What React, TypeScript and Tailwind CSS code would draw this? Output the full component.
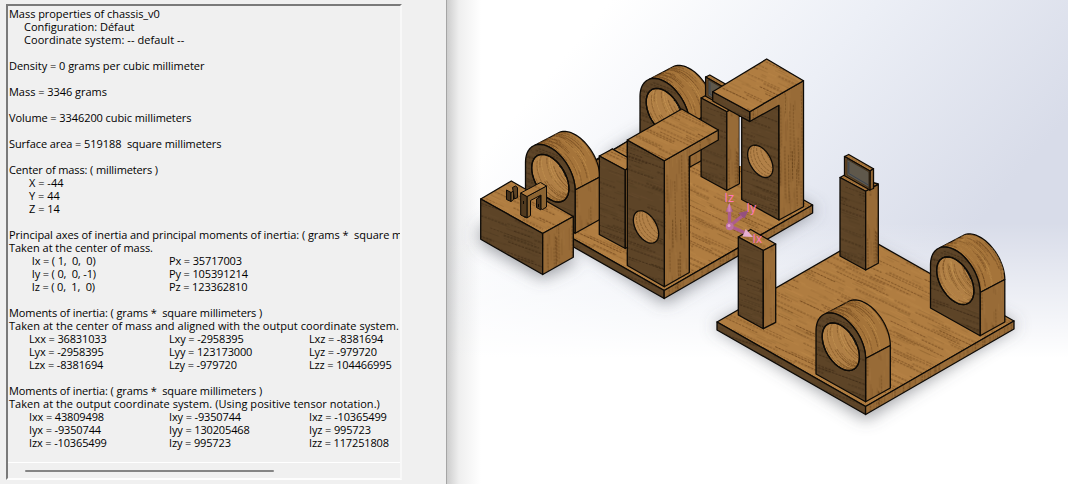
import React from "react";

type Row = { text?: string; style?: string; cells?: string[] };

const rows: Row[] = [
  { text: "Mass properties of chassis_v0", style: "tracking-[-0.04px]" },
  { text: "Configuration: Défaut", style: "pl-[15px]" },
  { text: "Coordinate system: -- default --", style: "pl-[15px] tracking-[0.07px]" },
  {},
  { text: "Density = 0 grams per cubic millimeter", style: "tracking-[-0.03px]" },
  {},
  { text: "Mass = 3346 grams", style: "tracking-[-0.04px]" },
  {},
  { text: "Volume = 3346200 cubic millimeters", style: "tracking-[-0.08px]" },
  {},
  { text: "Surface area = 519188  square millimeters", style: "tracking-[-0.08px]" },
  {},
  { text: "Center of mass: ( millimeters )", style: "tracking-[-0.12px]" },
  { text: "X = -44", style: "pl-[20px]" },
  { text: "Y = 44", style: "pl-[20px]" },
  { text: "Z = 14", style: "pl-[20px]" },
  {},
  { text: "Principal axes of inertia and principal moments of inertia: ( grams *  square millimeters )", style: "tracking-[-0.05px]" },
  { text: "Taken at the center of mass.", style: "tracking-[-0.03px]" },
  { cells: [" Ix = ( 1,  0,  0)", "Px = 35717003"] },
  { cells: [" Iy = ( 0,  0, -1)", "Py = 105391214"] },
  { cells: [" Iz = ( 0,  1,  0)", "Pz = 123362810"] },
  {},
  { text: "Moments of inertia: ( grams *  square millimeters )", style: "tracking-[-0.1px]" },
  { text: "Taken at the center of mass and aligned with the output coordinate system.", style: "tracking-[0.04px]" },
  { cells: ["Lxx = 36831033", "Lxy = -2958395", "Lxz = -8381694"] },
  { cells: ["Lyx = -2958395", "Lyy = 123173000", "Lyz = -979720"] },
  { cells: ["Lzx = -8381694", "Lzy = -979720", "Lzz = 104466995"] },
  {},
  { text: "Moments of inertia: ( grams *  square millimeters )", style: "tracking-[-0.1px]" },
  { text: "Taken at the output coordinate system. (Using positive tensor notation.)", style: "tracking-[0.05px]" },
  { cells: ["Ixx = 43809498", "Ixy = -9350744", "Ixz = -10365499"] },
  { cells: ["Iyx = -9350744", "Iyy = 130205468", "Iyz = 995723"] },
  { cells: ["Izx = -10365499", "Izy = 995723", "Izz = 117251808"] },
];

function random(seed: number) {
  let s = seed;
  return () => {
    s = (s * 16807) % 2147483647;
    return s / 2147483647;
  };
}

type GrainProps = { id: string; base: string; dark: string; light: string; angle: number; seed: number };

function Grain({ id, base, dark, light, angle, seed }: GrainProps) {
  const r = random(seed);
  const lines: React.ReactNode[] = [];
  for (let i = 0; i < 420; i++) {
    const x = r() * 160;
    const y = r() * 160;
    const len = 5 + r() * 18;
    const color = r() > 0.5 ? dark : light;
    lines.push(<path key={`f${i}`} d={`M${x} ${y}h${len}M${x - 160} ${y}h${len}`} stroke={color} strokeWidth="0.8" strokeOpacity="0.24" />);
  }
  for (let i = 0; i < 80; i++) {
    const x = r() * 160;
    const y = i * 2 + r() * 1.4;
    const len = 18 + r() * 45;
    const o = 0.45 + r() * 0.4;
    lines.push(<path key={`s${i}`} d={`M${x} ${y}h${len}M${x - 160} ${y}h${len}`} stroke={dark} strokeWidth="0.9" strokeOpacity={o} strokeDasharray="2.6 1" />);
  }
  return (
    <pattern id={id} width="160" height="160" patternUnits="userSpaceOnUse" patternTransform={`rotate(${angle})`}>
      <rect width="160" height="160" fill={base} />
      {lines}
    </pattern>
  );
}

const TOP = "url(#top)";
const DARK = "url(#dark)";
const SIDE = "url(#side)";

function Face({ p, f }: { p: string; f: string }) {
  return <polygon points={p} fill={f} />;
}

function Plate() {
  return (
    <g>
      <Face p="717,322 865,236.6 1014,321 865.6,406.5" f={TOP} />
      <Face p="717,322 865.6,406.5 865.6,414.5 717,330" f={DARK} />
      <Face p="1014,321 865.6,406.5 865.6,414.5 1014,329" f={SIDE} />
    </g>
  );
}

const CX = 840.8;
const CY = 344.7;

function arc(cx: number, cy: number, k: number, from: number, to: number) {
  const pts: string[] = [];
  for (let i = 0; i <= 40; i++) {
    const t = from + ((to - from) * i) / 40;
    const x = cx + k * 24.8 * Math.cos(t);
    const y = cy + k * (13.8 * Math.cos(t) - 28.6 * Math.sin(t));
    pts.push(`${x.toFixed(2)},${y.toFixed(2)}`);
  }
  return pts;
}

function Ring({ dx, dy, id }: { dx: number; dy: number; id: string }) {
  const tangent = Math.PI * 0.715;
  const front = arc(CX, CY, 1, 0, Math.PI);
  const outerFront = arc(CX, CY, 1, 0, tangent);
  const outerBack = arc(CX + 24.7, CY - 13, 1, tangent, 0);
  const hole = arc(CX, CY + 2, 0.75, 0, Math.PI * 2);
  const r = random(id.length * 97 + 31);
  const strands = Array.from({ length: 50 }, (_, i) => {
    const t = (i % 25) / 25 + r() * 0.03;
    const a = r() * 2;
    return { t, a, b: a + 0.3 + r() * 0.7, dark: r() > 0.4, o: 0.35 + r() * 0.45 };
  });
  return (
    <g transform={`translate(${dx} ${dy})`}>
      <clipPath id={id}><polygon points={hole.join(" ")} /></clipPath>
      <polygon points={[...outerFront, ...outerBack].join(" ")} fill="#a5743a" />
      <g fill="none">
        {strands.map((s, i) => (
          <polyline key={i} points={arc(CX + 24.7 * s.t, CY - 13 * s.t, 1, s.a, Math.min(s.b, tangent)).join(" ")} stroke={s.dark ? "#66401b" : "#c2914f"} strokeWidth="0.8" strokeOpacity={s.o} strokeDasharray="3 0.7" />
        ))}
      </g>
      <Face p="865.6,358.5 890.3,345.5 890.3,388 865.6,401.7" f={SIDE} />
      <polygon points={["865.6,401.7", ...front, "816,374"].join(" ")} fill={DARK} />
      <polygon points={hole.join(" ")} fill="#b07f45" />
      <g clipPath={`url(#${id})`} fill="none">
        {strands.map((s, i) => (
          <polyline key={i} points={arc(CX + 30 * s.t, CY + 2 - 15 * s.t, 0.75, Math.PI * 0.75 + s.a * 1.4, Math.PI * 0.75 + s.b * 1.4 + 0.2).join(" ")} stroke={s.dark ? "#70491f" : "#c99a58"} strokeWidth="0.8" strokeOpacity={s.o} strokeDasharray="3 0.7" />
        ))}
        <path d="M850 334c3 2 5 7 6.500 11" stroke="#111" strokeWidth="1.700" />
        <path d="M851.500 335.500c2 2 3.500 5 4.500 8" stroke="#d5d9e0" strokeWidth="0.800" strokeDasharray="1 1" />
      </g>
      <polygon points={hole.join(" ")} fill="none" />
    </g>
  );
}

function ScreenPost() {
  return (
    <g>
      <Face p="840,177.500 844.500,175 878.300,184 865.700,191.300" f={TOP} />
      <Face p="840,177.500 865.700,191.300 865.700,270 840,256" f={DARK} />
      <Face p="865.700,191.300 878.300,184.500 878.300,263.300 865.700,270" f={SIDE} />
      <Face p="844.500,156.500 848.700,154.500 873.500,168.700 870,171" f={TOP} />
      <Face p="870,171 873.500,168.700 873.500,188.500 869.500,190" f={SIDE} />
      <Face p="844.500,156.500 870,171 870,190 844.500,175.700" f="#6d4c28" />
      <polygon points="847,159.300 868.800,171.900 868.800,187.600 847,175" fill="#5f584b" strokeWidth="0.400" />
      <path d="M848.800 162v11.500l19.500 11.500" fill="none" stroke="#364150" strokeWidth="0.900" />
    </g>
  );
}

function Hole({ cx, cy, id }: { cx: number; cy: number; id: string }) {
  return (
    <g>
      <clipPath id={id}><polygon points={arc(cx, cy, 0.51, 0, Math.PI * 2).join(" ")} /></clipPath>
      <polygon points={arc(cx, cy, 0.51, 0, Math.PI * 2).join(" ")} fill="#b28148" />
      <g clipPath={`url(#${id})`} fill="none" stroke="#70491f" strokeWidth="0.800" strokeDasharray="3 1" strokeOpacity="0.700">
        {[3, 6, 9, 13, 17].map((o) => (
          <polyline key={o} points={arc(cx + o, cy - o * 0.55, 0.51, 2, 5.2).join(" ")} />
        ))}
      </g>
    </g>
  );
}

function Model() {
  return (
    <svg className="block h-[484px] w-[621px]" viewBox="447 0 621 484">
      <defs>
        <Grain id="top" base="#b07d41" dark="#673e16" light="#c8954f" angle={25} seed={11} />
        <Grain id="dark" base="#5d4427" dark="#352310" light="#70522e" angle={20} seed={23} />
        <Grain id="side" base="#986b37" dark="#5a3711" light="#ae7f45" angle={89} seed={37} />
        <filter id="soft" x="-20%" y="-20%" width="140%" height="140%"><feGaussianBlur stdDeviation="8" /></filter>
        <linearGradient id="cone"><stop offset="0" stopColor="#9a4f80" /><stop offset="0.5" stopColor="#d58abb" /><stop offset="1" stopColor="#94497a" /></linearGradient>
      </defs>

      <g filter="url(#soft)" fill="#5c5e66" fillOpacity="0.58">
        <polygon points="713,326 865,246 1018,325 866,420" />
        <polygon points="560,232 635,150 665,135 818,210 665,304" />
        <polygon points="479,228 530,205 577,262 543,279 480,244" />
        <polygon points="640,135 660,125 720,140 720,180 600,160" />
      </g>

      <g stroke="#0d0a06" strokeWidth="1.3" strokeLinejoin="round">
        <g transform="translate(-201.400 -116)"><Plate /></g>
        <Ring dx={-176} dy={-234.500} id="bore-back" />
        <Ring dx={-290.500} dy={-168.500} id="bore-left" />

        <g transform="translate(-138.900 -79.500)"><ScreenPost /></g>
        <rect x="739.500" y="117" width="2" height="49" fill="#e6e8f0" stroke="none" />
        <Face p="741.700,117 749.700,121.300 779,103 779,220 741.700,199.500" f={DARK} />
        <Hole cx={760.300} cy={161.300} id="hole-back" />
        <Face p="749.700,111.700 803.500,80.700 803.500,206.700 779,220 779,105.300 749.700,121.500" f={SIDE} />
        <Face p="712.700,91.700 749.700,111.700 749.700,121.500 712.700,101" f={DARK} />
        <Face p="712.700,91.700 766.700,59 803.500,80.700 749.700,111.700" f={TOP} />

        <Face p="597,160 627.500,141.300 627.500,158 612.300,149" f={TOP} />
        <Face p="599.300,156 612.300,149 636,162 625.300,170" f={TOP} />
        <Face p="599.300,156 625.300,170 625.300,248.500 599.300,234.500" f={DARK} />
        <Face p="625.300,170 630,168 630,246 625.300,248.500" f={SIDE} />

        <Face p="664.300,160.700 718.300,130 718.300,140 689.300,156.500 689.300,272.500 664.300,286.700" f={SIDE} />
        <Face p="627.300,140 664.300,160.700 664.300,286.700 627.300,265.500" f={DARK} />
        <Face p="627.300,140 681.700,109 718.300,130 664.300,160.700" f={TOP} />
        <Hole cx={646} cy={227} id="hole-front" />

        <Face p="480.700,199 511.300,181 573.300,216.500 542.700,233.500" f={TOP} />
        <Face p="480.700,199 542.700,233.500 542.700,274.500 480.700,239.300" f={DARK} />
        <Face p="542.700,233.500 573.300,216.500 573.300,257.300 542.700,274.500" f={SIDE} />
        <g strokeWidth="1">
          <Face p="506.500,190 511,192.500 511,201.500 506.500,199.500" f="#47331d" />
          <Face p="511,192.500 513.500,191 513.500,199.500 511,201.500" f="#7e5a2e" />
          <Face p="512.500,187.500 515.500,186 517.500,187.500 517.500,197.500 514.500,199" f="#5c4224" />
          <Face p="536.500,199 541,196 541,210 536.500,207.500" f="#47331d" />
          <Face p="527,196.500 546.500,186 546.500,207 542.500,209.500 541,208.500 541,195 530.500,200.500 530.500,215.500 527,218" f="#8b6432" />
          <Face p="520.700,193 527,196.500 527,218 520.700,215" f="#513a1f" />
          <Face p="520.700,193 540.500,182.500 546.500,186 527,196.500" f={TOP} />
          <path d="M523.500 201v3M525 216v2M538.500 204v3" />
        </g>

        <Plate />
        <ScreenPost />
        <Ring dx={114.500} dy={-66} id="bore-right" />
        <Ring dx={0} dy={0} id="bore-near" />

        <Face p="738.300,237 750.700,229.500 775.700,244 763.300,250.500" f={TOP} />
        <Face p="738.300,237 763.300,250.500 763.300,328.700 738.300,315" f={DARK} />
        <Face p="763.300,250.500 775.700,244 775.700,322.300 763.300,328.700" f={SIDE} />
      </g>

      <path d="M729.500 226v-15M729.700 226l12.500-10M729.700 226l14.500 6.500" fill="none" stroke="#ac5d8c" strokeWidth="3.4" />
      <path d="M729.300 203l3.700 8.800h-7.400z" fill="url(#cone)" />
      <path d="M748.500 210.500l-4 8-6-5.500z" fill="#94507f" />
      <path d="M753 237l-10.500-0.500 3.200-7.500z" fill="#e6aed2" />
      <circle cx="729.700" cy="226.300" r="3.900" fill="#bb6f9f" />
      <circle cx="729" cy="225.600" r="1.500" fill="#e8a6d0" />
      <g fill="#ff78b7" fontFamily="Inter, sans-serif" fontSize="12">
        <text x="724.500" y="202">Iz</text>
        <text x="746.500" y="211.500">Iy</text>
        <text x="752.500" y="243">Ix</text>
      </g>
    </svg>
  );
}

export default function App() {
  return (
    <main className="flex h-[484px] w-[1068px] overflow-hidden bg-[#f0f0f0]">
      <aside className="h-full w-[447px] shrink-0 border-r border-[#a5a5a5] pl-[6px] pt-[4px]">
        <section className="flex h-[476px] w-[396px] flex-col border-2 border-b-[#fdfdfd] border-l-[#7a7a7a] border-r-[#f8f8f8] border-t-[#7a7a7a]">
          <div className="h-[456px] overflow-hidden whitespace-pre pl-px pt-px font-['Open_Sans','Noto_Sans',sans-serif] text-[11px] leading-[13px] text-black">
            {rows.map((row, i) => (
              <div key={i} className={`h-[13px] ${row.style ?? ""}`}>
                {row.cells ? (
                  <div className="grid w-[400px] grid-cols-[140px_140px_120px] pl-[20px] tracking-[-0.14px]">
                    {row.cells.map((cell) => <span key={cell}>{cell}</span>)}
                  </div>
                ) : row.text}
              </div>
            ))}
          </div>
          <div className="flex h-[16px] items-center border-t border-white pl-[17px]">
            <div className="h-[2px] w-[249px] rounded-full bg-[#858585]" />
          </div>
        </section>
      </aside>
      <div className="h-full w-[621px] bg-[linear-gradient(90deg,rgba(90,90,90,0.3)_0px,rgba(120,120,120,0.12)_12px,rgba(255,255,255,0)_34px),linear-gradient(180deg,rgba(255,255,255,0)_46%,#fff_74%),linear-gradient(130deg,#fff_16%,#eceff6_42%,#d8dce9_70%)]">
        <Model />
      </div>
    </main>
  );
}
